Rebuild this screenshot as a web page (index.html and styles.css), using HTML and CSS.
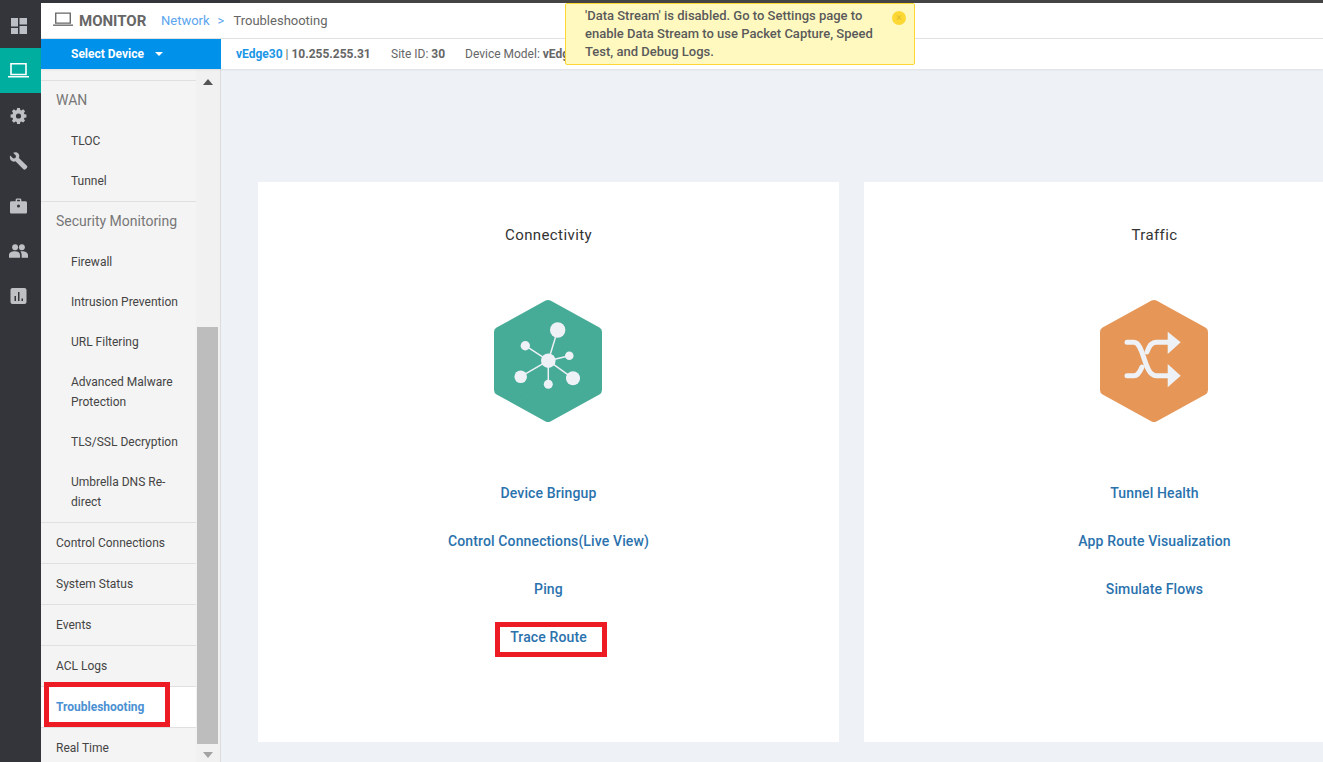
FILE: index.html
```html
<!DOCTYPE html>
<html lang="en">
<head>
<meta charset="utf-8">
<title>Monitor - Troubleshooting</title>
<link rel="stylesheet" href="styles.css">
</head>
<body>
<div class="strip"></div>
<div class="app">
  <nav class="rail">
    <div class="rail-item">
      <svg class="ri" viewBox="0 0 16 16"><path d="M0 0h7v8.500H0zM8.500 0H16v6.500H8.500zM0 10h7v6H0zM8.500 8H16v8H8.500z"/></svg>
    </div>
    <div class="rail-item active">
      <svg class="ri-laptop" viewBox="0 0 21 15"><path d="M3 .8h15v10.700H3z" fill="none" stroke="#fff" stroke-width="1.600"/><path d="M0 13h21v1.500H0z" fill="#fff"/></svg>
    </div>
    <div class="rail-item">
      <svg class="ri-lg" viewBox="0 0 18 18"><path fill-rule="evenodd" d="M7.400 0h3.200l.4 2.200 1.300.6 1.900-1.300 2.200 2.200-1.300 1.900.6 1.400 2.200.4v3.200l-2.200.4-.6 1.300 1.300 1.900-2.200 2.200-1.900-1.300-1.300.6-.4 2.200H7.400L7 15.800l-1.300-.6-1.900 1.300-2.200-2.200 1.300-1.900-.6-1.300L.1 10.600V7.400l2.200-.4.6-1.400-1.300-1.900 2.200-2.200 1.900 1.300L7 2.200zM9 6.100a2.900 2.900 0 1 0 0 5.800 2.900 2.900 0 0 0 0-5.800z"/></svg>
    </div>
    <div class="rail-item">
      <svg class="ri-xl" viewBox="0 0 18 18"><path d="M.6 3.400 3.800 6.400l2.200-.5.500-2.200L3.600.7C5.800-.3 8.200.2 9.200 1.900c.8 1.300.7 2.800.2 4l8 7.900c.6.600.6 1.500 0 2.100l-1.400 1.400c-.6.600-1.500.6-2.100 0L6 9.300C4.600 9.900 2.800 9.700 1.600 8.500.4 7.200.1 5 .6 3.400z"/></svg>
    </div>
    <div class="rail-item">
      <svg class="ri-lg" viewBox="0 0 18 16"><path fill-rule="evenodd" d="M6 3V1.500C6 .6 6.700 0 7.500 0h3c.8 0 1.500.6 1.500 1.500V3h4.500c.8 0 1.500.7 1.500 1.500v10c0 .8-.7 1.500-1.500 1.500h-15C.7 16 0 15.300 0 14.500v-10C0 3.700.7 3 1.500 3zm1.500 0h3V1.500h-3zM9 6.500a1.600 1.600 0 1 0 0 3.200 1.600 1.600 0 0 0 0-3.200z"/></svg>
    </div>
    <div class="rail-item">
      <svg class="ri-xl" viewBox="0 0 18 13"><circle cx="5.800" cy="3" r="2.800"/><circle cx="12.200" cy="3" r="2.800"/><path d="M0 13v-2.500C0 8.100 2.500 6.800 5.500 6.800s5 1.300 5 3.700V13zM12 13v-2.500c0-1.400-.4-2.600-1.200-3.500.5-.1 1-.2 1.500-.2 3 0 5.700 1.300 5.700 3.700V13z"/></svg>
    </div>
    <div class="rail-item">
      <svg class="ri-lg" viewBox="0 0 16 16"><path fill-rule="evenodd" d="M2 0h12c1.100 0 2 .9 2 2v12c0 1.100-.9 2-2 2H2c-1.100 0-2-.9-2-2V2C0 .9.900 0 2 0zm5.500 4v9h1.500V4zM4 8v5h1.500V8zm7 2.500V13h1.500v-2.500z"/></svg>
    </div>
  </nav>
  <div class="main">
    <header class="header">
      <svg class="head-laptop" viewBox="0 0 22 16"><path d="M3 1h16v11H3z" fill="none" stroke="#666" stroke-width="1.500"/><path d="M0 13.500h22V15H0z" fill="#666"/></svg>
      <span class="head-title">MONITOR</span>
      <span class="crumb-link">Network</span>
      <span class="crumb-sep">&gt;</span>
      <span class="crumb">Troubleshooting</span>
    </header>
    <div class="subbar">
      <div class="select-device"><span>Select Device</span><i class="caret"></i></div>
      <div class="device-info">
        <span class="info-host"><b class="blue">vEdge30</b> | <b>10.255.255.31</b></span>
        <span class="info-site">Site ID: <b>30</b></span>
        <span class="info-model">Device Model: <b>vEdge</b></span>
      </div>
    </div>
    <div class="body">
      <aside class="side">
        <ul class="menu">
          <li class="sec">WAN</li>
          <li class="sub">TLOC</li>
          <li class="sub">Tunnel</li>
          <li class="sec">Security Monitoring</li>
          <li class="sub">Firewall</li>
          <li class="sub">Intrusion Prevention</li>
          <li class="sub">URL Filtering</li>
          <li class="sub">Advanced Malware Protection</li>
          <li class="sub">TLS/SSL Decryption</li>
          <li class="sub">Umbrella DNS Re-direct</li>
          <li class="top">Control Connections</li>
          <li class="top">System Status</li>
          <li class="top">Events</li>
          <li class="top">ACL Logs</li>
          <li class="top current">Troubleshooting</li>
          <li class="top">Real Time</li>
        </ul>
        <div class="scrollbar">
          <i class="arrow-up"></i>
          <div class="thumb"></div>
          <i class="arrow-down"></i>
        </div>
      </aside>
      <main class="content">
        <section class="card">
          <h2 class="card-title">Connectivity</h2>
          <svg class="hex" viewBox="0 0 108 124">
            <path class="hex-green" d="M54 6 L103 33 V91 L54 118 L5 91 V33 Z"/>
            <g class="net-lines">
              <path d="M54.300 61.700 63.700 31M54.300 61.700 31.300 46.700M54.300 61.700 75.300 56.700M54.300 61.700 26.700 77.700M54.300 61.700 79 79.300M54.300 61.700V85.300"/>
            </g>
            <g class="net-nodes">
              <circle cx="54.300" cy="61.700" r="7.300"/><circle cx="63.700" cy="31" r="7.700"/><circle cx="31.300" cy="46.700" r="4.700"/><circle cx="75.300" cy="56.700" r="4.300"/><circle cx="26.700" cy="77.700" r="6.300"/><circle cx="79" cy="79.300" r="7"/><circle cx="54.300" cy="85.300" r="4.500"/>
            </g>
          </svg>
          <a class="link">Device Bringup</a>
          <a class="link">Control Connections(Live View)</a>
          <a class="link">Ping</a>
          <a class="link">Trace Route</a>
        </section>
        <section class="card">
          <h2 class="card-title">Traffic</h2>
          <svg class="hex" viewBox="0 0 108 124">
            <path class="hex-orange" d="M54 6 L103 33 V91 L54 118 L5 91 V33 Z"/>
            <g class="shuffle-lines">
              <path d="M27 43.300H34C44 43.300 44 76.700 56 76.700H69"/>
              <path d="M27 76.700H34C38 76.700 40 73 42 68M47 53C49 47 52 43.300 56 43.300H69"/>
            </g>
            <path class="shuffle-heads" d="M67.700 32.700 80.700 43.300 67.700 55ZM67.700 65 80.700 76.700 67.700 88.300Z"/>
          </svg>
          <a class="link">Tunnel Health</a>
          <a class="link">App Route Visualization</a>
          <a class="link">Simulate Flows</a>
        </section>
      </main>
    </div>
  </div>
</div>
<div class="toast">
  <p class="toast-text">'Data Stream' is disabled. Go to Settings page to enable Data Stream to use Packet Capture, Speed Test, and Debug Logs.</p>
  <span class="toast-close">×</span>
</div>
<div class="mark mark-trouble"></div>
<div class="mark mark-trace"></div>
</body>
</html>
```
FILE: styles.css
```css
* { box-sizing: border-box; }
html, body { margin: 0; height: 100%; overflow: hidden; }
body { font-family: Roboto, "Liberation Sans", sans-serif; color: #555; background: #fff; position: relative; }
.strip { height: 3px; background: linear-gradient(to right, #33353a 240px, #444 240px); }
.app { display: flex; height: 759px; }

.rail { width: 41px; flex: none; background: #33353a; }
.rail-item { height: 45px; display: flex; align-items: center; justify-content: center; padding-right: 4px; }
.rail-item.active { background: #00ae9f; }
.ri { width: 16px; height: 16px; fill: #bcc0c6; }
.ri-lg { width: 17px; height: 16px; fill: #bfc0c4; }
.ri-xl { width: 19px; height: 18px; fill: #bfc0c4; }
.ri-laptop { width: 21px; height: 15px; }

.main { flex: 1; min-width: 0; display: flex; flex-direction: column; }
.header { height: 36px; flex: none; background: #fff; border-bottom: 1px solid #e2e2e2; display: flex; align-items: center; padding-left: 12px; }
.head-laptop { width: 20px; height: 15px; margin-bottom: 3px; }
.head-title { font-size: 15px; font-weight: 700; color: #666; margin-left: 6px; width: 82px; }
.crumb-link { font-size: 13px; color: #5aa5ee; }
.crumb-sep { font-size: 13px; color: #5aa5ee; margin-left: 8px; }
.crumb { font-size: 13px; color: #666; margin-left: 9px; }

.subbar { height: 30px; flex: none; display: flex; background: #fff; box-shadow: 0 1px 2px rgba(0,0,0,.08); position: relative; z-index: 1; }
.select-device { width: 180px; height: 30px; background: #0091ea; color: #fff; font-size: 12px; font-weight: 700; display: flex; align-items: center; padding-left: 30px; }
.caret { width: 0; height: 0; border: 4px solid transparent; border-top-color: #fff; border-bottom: 0; margin-left: 11px; }
.device-info { display: flex; align-items: center; height: 29px; font-size: 12px; color: #666; padding-left: 15px; }
.device-info b { font-weight: 700; }
.blue { color: #1a96e6; }
.info-host { width: 155px; }
.info-site { width: 74px; }

.body { flex: 1; min-height: 0; display: flex; }
.side { width: 180px; flex: none; display: flex; background: #f1f1f1; border-right: 1px solid #dcdcdc; overflow: hidden; }
.menu { list-style: none; margin: 0; padding: 11px 0 0; width: 155px; flex: none; background: #f4f4f4; font-size: 12px; color: #444; }
.sec { height: 41px; border-top: 1px solid #e0e0e0; padding: 9px 15px; line-height: 20px; font-size: 14px; color: #777; }
.sub { padding: 10px 15px 10px 30px; line-height: 20px; }
.top { height: 41px; border-top: 1px solid #e0e0e0; padding: 10px 15px; line-height: 20px; }
.current { background: #fff; color: #4a90d2; font-weight: 700; }

.scrollbar { width: 24px; flex: none; display: flex; flex-direction: column; align-items: center; position: relative; }
.arrow-up { width: 0; height: 0; border: 5.500px solid transparent; border-bottom: 6px solid #555; border-top: 0; margin-top: 10px; }
.thumb { width: 21px; height: 417px; background: #bdbdbd; margin-top: 242px; margin-left: -1px; flex: none; }
.arrow-down { width: 0; height: 0; border: 5.500px solid transparent; border-top: 6px solid #a3a3a3; border-bottom: 0; margin-top: 8px; margin-left: -1px; }

.content { flex: 1; min-width: 0; background: #eef1f6; display: flex; gap: 25px; padding: 113px 0 0 37px; overflow: hidden; }
.card { width: 581px; height: 560px; flex: none; background: #fff; display: flex; flex-direction: column; align-items: center; padding-top: 43px; }
.card-title { margin: 0; font-size: 15px; font-weight: 400; line-height: 20px; color: #333; letter-spacing: .4px; }
.hex { width: 108px; height: 124px; margin: 54px 1px 46px 0; flex: none; }
.hex-green { fill: #46ab97; stroke: #46ab97; stroke-width: 10; stroke-linejoin: round; }
.hex-orange { fill: #e69758; stroke: #e69758; stroke-width: 10; stroke-linejoin: round; }
.net-lines path { stroke: #eef1f6; stroke-width: 1.500; fill: none; }
.net-nodes circle { fill: #eef1f6; }
.shuffle-lines path { stroke: #eef1f6; stroke-width: 5; stroke-linecap: round; fill: none; }
.shuffle-heads { fill: #eef1f6; }
.link { height: 48px; flex: none; line-height: 48px; font-size: 14px; font-weight: 500; color: #2a72ad; letter-spacing: .13px; }

.toast { position: absolute; z-index: 5; left: 565px; top: 3px; width: 350px; height: 62px; background: #fff9c0; border: 1px solid #fdd835; border-radius: 2px; padding: 3px 0 0 19px; display: flex; }
.toast-text { margin: 0; width: 293px; font-size: 13px; font-weight: 500; line-height: 18px; color: #5a5a5a; }
.toast-close { width: 14px; height: 14px; margin: 4px 0 0 14px; border-radius: 50%; background: #fdd835; color: #e0bd2a; font-size: 11px; line-height: 14px; text-align: center; }

.mark { position: absolute; z-index: 6; border: 5px solid #ed1c24; }
.mark-trouble { left: 44px; top: 682px; width: 126px; height: 45px; }
.mark-trace { left: 495px; top: 622px; width: 112px; height: 35px; }
```
